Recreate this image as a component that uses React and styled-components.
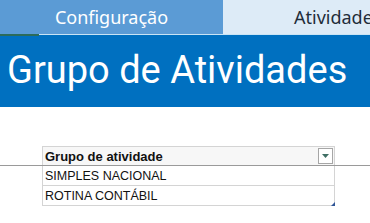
import React from "react";
import styled, { createGlobalStyle } from "styled-components";

const Global = createGlobalStyle`
  body {
    margin: 0;
    background: #ffffff;
    font-family: "Liberation Sans", Arial, sans-serif;
  }
`;

const rows = ["SIMPLES NACIONAL", "ROTINA CONTÁBIL"];

const App = () => {
  return (
    <Page>
      <Global />
      <Tabs>
        <Tab active>Configuração</Tab>
        <Tab>Atividades</Tab>
      </Tabs>
      <Divider>
        <Mark />
      </Divider>
      <Banner>Grupo de Atividades</Banner>

      <TableArea>
        <HeaderLine>
          <HeaderCell>
            Grupo de atividade
            <FilterButton>
              <svg width="7" height="4" viewBox="0 0 7 4">
                <path d="M0 0 H7 L3.5 4 Z" fill="#3f6f64" />
              </svg>
            </FilterButton>
          </HeaderCell>
        </HeaderLine>
        {rows.map((r, i) => (
          <Row key={r}>
            {r}
            {i === rows.length - 1 && <Handle />}
          </Row>
        ))}
      </TableArea>
    </Page>
  );
};

const Page = styled.div`
  width: 370px;
  height: 223px;
  overflow: hidden;
`;

const Tabs = styled.div`
  display: grid;
  grid-template-columns: 223px 1fr;
  height: 34px;
`;

const Tab = styled.div`
  display: flex;
  align-items: center;
  justify-content: ${(p) => (p.active ? "center" : "flex-start")};
  padding-left: ${(p) => (p.active ? "0" : "71px")};
  background: ${(p) => (p.active ? "#5b9bd5" : "#ddebf7")};
  color: ${(p) => (p.active ? "#ffffff" : "#1f2d3a")};
  font-family: "Noto Sans", "Open Sans", sans-serif;
  font-size: 18px;
  white-space: nowrap;
  overflow: hidden;
`;

const Divider = styled.div`
  height: 1px;
  background: #c9e4f5;
  position: relative;
`;

const Mark = styled.div`
  position: absolute;
  left: 0;
  top: 0;
  width: 39px;
  height: 2px;
  background: #2c6b5a;
`;

const Banner = styled.div`
  height: 72px;
  background: #0070c0;
  color: #ffffff;
  font-family: Roboto, "Noto Sans", sans-serif;
  font-size: 38px;
  line-height: 70px;
  padding-left: 7px;
  white-space: nowrap;
`;

const TableArea = styled.div`
  padding-top: 39px;
`;

const HeaderLine = styled.div`
  border-bottom: 1px solid #9a9a9a;
`;

const HeaderCell = styled.div`
  margin-left: 42px;
  width: 289px;
  height: 18px;
  border: 1px solid #d4d4d4;
  border-bottom: none;
  background: #f7f7f7;
  display: flex;
  align-items: center;
  justify-content: space-between;
  padding-left: 2px;
  font-size: 13px;
  font-weight: 700;
  color: #111;
`;

const FilterButton = styled.div`
  width: 13px;
  height: 14px;
  margin-right: 1px;
  border: 1px solid #a6a6a6;
  background: #ffffff;
  display: flex;
  align-items: center;
  justify-content: center;
`;

const Row = styled.div`
  position: relative;
  margin-left: 42px;
  width: 289px;
  height: 19px;
  border-left: 1px solid #d4d4d4;
  border-right: 1px solid #d4d4d4;
  border-bottom: 1px solid #d4d4d4;
  padding-left: 2px;
  display: flex;
  align-items: center;
  font-size: 12.5px;
  color: #111;
`;

const Handle = styled.div`
  position: absolute;
  right: -1px;
  bottom: -1px;
  width: 0;
  height: 0;
  border-left: 4px solid transparent;
  border-bottom: 4px solid #2f5597;
`;

export default App;
